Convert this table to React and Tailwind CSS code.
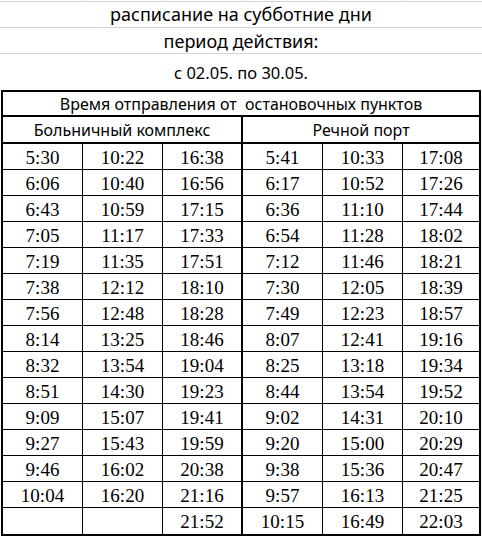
import React from "react";

const left = [
  ["5:30", "10:22", "16:38"],
  ["6:06", "10:40", "16:56"],
  ["6:43", "10:59", "17:15"],
  ["7:05", "11:17", "17:33"],
  ["7:19", "11:35", "17:51"],
  ["7:38", "12:12", "18:10"],
  ["7:56", "12:48", "18:28"],
  ["8:14", "13:25", "18:46"],
  ["8:32", "13:54", "19:04"],
  ["8:51", "14:30", "19:23"],
  ["9:09", "15:07", "19:41"],
  ["9:27", "15:43", "19:59"],
  ["9:46", "16:02", "20:38"],
  ["10:04", "16:20", "21:16"],
  ["", "", "21:52"],
];
const right = [
  ["5:41", "10:33", "17:08"],
  ["6:17", "10:52", "17:26"],
  ["6:36", "11:10", "17:44"],
  ["6:54", "11:28", "18:02"],
  ["7:12", "11:46", "18:21"],
  ["7:30", "12:05", "18:39"],
  ["7:49", "12:23", "18:57"],
  ["8:07", "12:41", "19:16"],
  ["8:25", "13:18", "19:34"],
  ["8:44", "13:54", "19:52"],
  ["9:02", "14:31", "20:10"],
  ["9:20", "15:00", "20:29"],
  ["9:38", "15:36", "20:47"],
  ["9:57", "16:13", "21:25"],
  ["10:15", "16:49", "22:03"],
];

const sans = { fontFamily: '"Noto Sans", "Open Sans", sans-serif' };

export default function App() {
  return (
    <div className="w-[482px] h-[537px] bg-white text-black overflow-hidden" style={sans}>
      <div className="h-[2px] border-b border-[#d4d4d4] grid grid-cols-[82px_80px_80px_80px_80px_1fr]">
        <div className="border-r border-[#d4d4d4]" />
        <div className="border-r border-[#d4d4d4]" />
        <div className="border-r border-[#d4d4d4]" />
        <div className="border-r border-[#d4d4d4]" />
        <div className="border-r border-[#d4d4d4]" />
        <div />
      </div>
      <div className="h-[26px] border-b border-[#d4d4d4] flex items-end justify-center pb-[1px]">
        <span className="text-[18px] leading-[24px]">расписание на субботние дни</span>
      </div>
      <div className="h-[26px] border-b border-[#d4d4d4] flex items-end justify-center">
        <span className="text-[18px] leading-[24px]">период действия:</span>
      </div>
      <div className="h-[36px] flex items-center justify-center pt-[1px]">
        <span className="text-[16.5px] leading-[22px]">с 02.05. по 30.05.</span>
      </div>
      <div className="ml-[1px] w-[480px] border-2 border-black">
        <div className="h-[25px] border-b-2 border-black flex items-center justify-center">
          <span className="text-[16px] leading-[20px] whitespace-pre">Время отправления от  остановочных пунктов</span>
        </div>
        <div className="h-[27px] border-b-2 border-black grid grid-cols-[240px_1fr]">
          <div className="border-r-2 border-black flex items-center justify-center">
            <span className="text-[16px] leading-[20px]">Больничный комплекс</span>
          </div>
          <div className="flex items-center justify-center">
            <span className="text-[16px] leading-[20px]">Речной порт</span>
          </div>
        </div>
        {left.map((l, i) => {
          const r = right[i];
          const last = i === left.length - 1;
          const cells = [...l, ...r];
          return (
            <div
              key={i}
              className={
                "h-[26px] grid grid-cols-[80px_80px_80px_80px_80px_1fr] " +
                (last ? "" : "border-b border-black")
              }
              style={{ fontFamily: '"Liberation Serif", "Times New Roman", serif' }}
            >
              {cells.map((t, j) => (
                <div
                  key={j}
                  className={
                    "flex items-center justify-center text-[19px] leading-[22px] pt-[2px] " +
                    (j === 2 ? "border-r-2 border-black" : j === 5 ? "" : "border-r border-black")
                  }
                >
                  {t}
                </div>
              ))}
            </div>
          );
        })}
      </div>
    </div>
  );
}
